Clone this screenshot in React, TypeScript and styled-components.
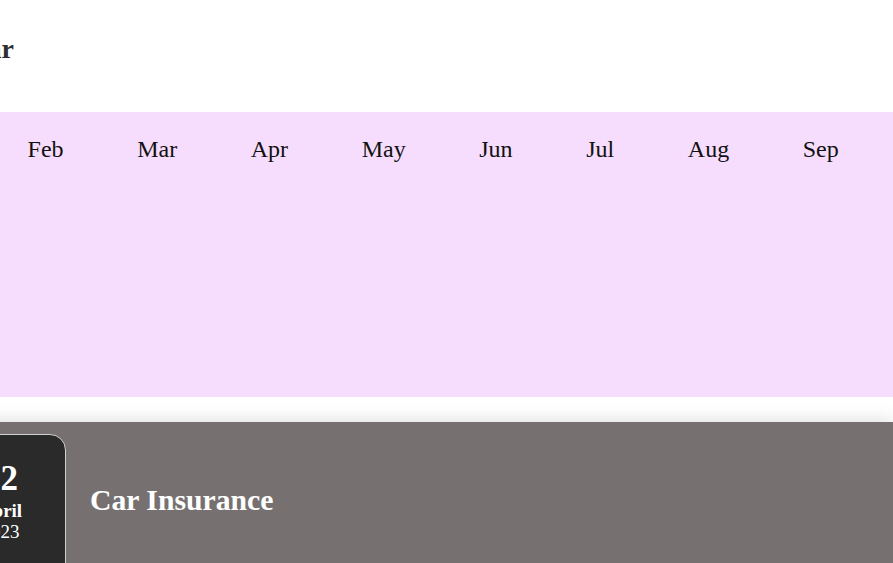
import React from "react";
import styled, { createGlobalStyle } from "styled-components";

const Global = createGlobalStyle`
  html, body { margin: 0; padding: 0; background: #ffffff; overflow: hidden; }
  body { font-family: "Liberation Serif", "Times New Roman", serif; }
`;

const Page = styled.div`
  margin-left: -130px;
  width: calc(100% + 130px);
  display: flex;
  flex-direction: column;
`;

const Header = styled.header`
  height: 112px;
  display: flex;
  align-items: flex-start;
`;

const Title = styled.h1`
  margin: 0;
  padding: 33px 0 0 32px;
  font-size: 28px;
  line-height: 32px;
  font-weight: 700;
  color: #2f2f2f;
`;

const Months = styled.section`
  height: 285px;
  background: #f7ddfd;
  display: flex;
  align-items: flex-start;
  gap: 73.6px;
  padding: 23px 0 0 52px;
  box-sizing: border-box;
`;

const Month = styled.span`
  font-size: 24px;
  line-height: 28px;
  color: #111111;
  white-space: nowrap;
`;

const EventList = styled.section`
  margin-top: 25px;
  display: flex;
  flex-direction: column;
`;

const EventCard = styled.article`
  background: #767170;
  box-shadow: 0 0 18px rgba(0, 0, 0, 0.16);
  display: flex;
  align-items: flex-start;
  gap: 24px;
  padding: 12px 0 12px 65px;
  height: 180px;
  box-sizing: border-box;
`;

const DateBox = styled.div`
  width: 131px;
  height: 150px;
  box-sizing: border-box;
  background: #2a2a2a;
  border: 1px solid #d0d0d0;
  border-radius: 16px;
  color: #ffffff;
  display: flex;
  flex-direction: column;
  align-items: center;
  padding-top: 24px;
`;

const Day = styled.div`
  font-size: 35px;
  line-height: 40px;
  font-weight: 700;
`;

const MonthName = styled.div`
  font-size: 19px;
  line-height: 23px;
  font-weight: 700;
`;

const Year = styled.div`
  font-size: 19px;
  line-height: 19px;
`;

const EventTitle = styled.h2`
  margin: 0;
  padding-top: 49px;
  font-size: 29.7px;
  line-height: 34px;
  font-weight: 700;
  color: #ffffff;
`;

const monthNames = ["Jan", "Feb", "Mar", "Apr", "May", "Jun", "Jul", "Aug", "Sep", "Oct", "Nov", "Dec"];

export default function App() {
  return (
    <>
      <Global />
      <Page>
        <Header>
          <Title>Calendar</Title>
        </Header>
        <Months>
          {monthNames.map((m) => (
            <Month key={m}>{m}</Month>
          ))}
        </Months>
        <EventList>
          <EventCard>
            <DateBox>
              <Day>12</Day>
              <MonthName>April</MonthName>
              <Year>2023</Year>
            </DateBox>
            <EventTitle>Car Insurance</EventTitle>
          </EventCard>
        </EventList>
      </Page>
    </>
  );
}
